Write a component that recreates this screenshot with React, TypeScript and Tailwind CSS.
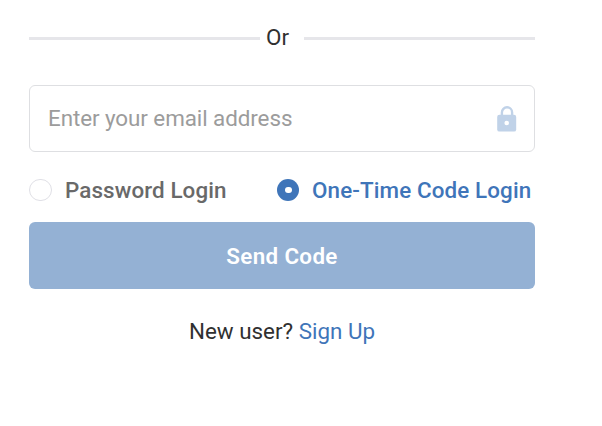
import { useState } from "react";

const LockIcon = () => (
  <svg width="20" height="26" viewBox="0 0 20 26" fill="none">
    <path d="M4.9 10V6.4a5.1 5.1 0 0 1 10.2 0V10" stroke="#c0d2e8" strokeWidth="2.4" />
    <rect x="0.2" y="8.7" width="19" height="16.9" rx="2.2" fill="#c0d2e8" />
    <circle cx="9.7" cy="17" r="2.3" fill="white" />
  </svg>
);

const Radio = ({ checked }: { checked: boolean }) =>
  checked ? (
    <span className="flex size-[22px] items-center justify-center rounded-full bg-[#3f75b9]">
      <span className="h-[6px] w-[7px] rounded-full bg-white" />
    </span>
  ) : (
    <span className="h-[22px] w-[23px] rounded-full border border-[#e0e0e6]" />
  );

const App = () => {
  const [method, setMethod] = useState("code");

  return (
    <main className="min-h-screen bg-white pl-[29px] pt-[22px] font-['Roboto',sans-serif] text-[22.4px] text-[#303030]">
      <div className="w-[506px]">
        {/* Divider */}
        <div className="flex h-8 items-center">
          <span className="mt-px h-[3px] w-[231px] bg-[#e6e6ea]" />
          <span className="flex-1 pb-[2px] pl-[6px] leading-[30px]">Or</span>
          <span className="mt-px h-[3px] w-[231px] bg-[#e6e6ea]" />
        </div>

        {/* Email */}
        <label className="mt-[31px] flex h-[67px] items-center rounded-md border border-[#dedfe2] pl-[18px] pr-[17px]">
          <input
            type="email"
            placeholder="Enter your email address"
            className="min-w-0 flex-1 tracking-[-0.07px] outline-none placeholder:text-[#9c9c9c]"
          />
          <LockIcon />
        </label>

        {/* Login method */}
        <div className="mt-[22px] flex h-8 items-center font-medium">
          <button
            onClick={() => setMethod("password")}
            className="flex w-[248px] items-center gap-[13px] tracking-[0.1px] text-[#696969]"
          >
            <Radio checked={method === "password"} />
            <span className="pt-[2px]">Password Login</span>
          </button>
          <button
            onClick={() => setMethod("code")}
            className="flex items-center gap-[13px] whitespace-nowrap tracking-[0.12px] text-[#3f75b9]"
          >
            <Radio checked={method === "code"} />
            <span className="pt-[2px]">One-Time Code Login</span>
          </button>
        </div>

        <button className="mt-4 block h-[67px] w-full rounded-md bg-[#94b1d4] pt-[2px] font-semibold tracking-[0.35px] text-white">
          Send Code
        </button>

        <p className="mt-[26px] text-center leading-8">
          New user? <a href="#signup" className="text-[#3f75b9]">Sign Up</a>
        </p>
      </div>
    </main>
  );
};

export default App;
